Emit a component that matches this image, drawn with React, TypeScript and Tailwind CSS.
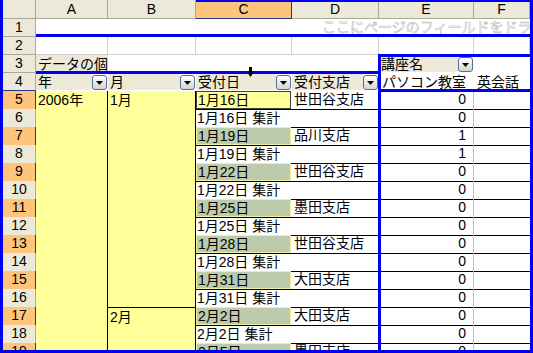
import React from "react";

type DataRow = {
  n: number;
  a?: string;
  b?: string;
  bTop?: boolean;
  c?: string;
  d?: string;
  sub?: string;
  e: string;
  active?: boolean;
};

const rows: DataRow[] = [
  { n: 5, a: "2006年", b: "1月", c: "1月16日", d: "世田谷支店", e: "0", active: true },
  { n: 6, sub: "1月16日 集計", e: "0" },
  { n: 7, c: "1月19日", d: "品川支店", e: "1" },
  { n: 8, sub: "1月19日 集計", e: "1" },
  { n: 9, c: "1月22日", d: "世田谷支店", e: "0" },
  { n: 10, sub: "1月22日 集計", e: "0" },
  { n: 11, c: "1月25日", d: "墨田支店", e: "0" },
  { n: 12, sub: "1月25日 集計", e: "0" },
  { n: 13, c: "1月28日", d: "世田谷支店", e: "0" },
  { n: 14, sub: "1月28日 集計", e: "0" },
  { n: 15, c: "1月31日", d: "大田支店", e: "0" },
  { n: 16, sub: "1月31日 集計", e: "0" },
  { n: 17, b: "2月", bTop: true, c: "2月2日", d: "大田支店", e: "0" },
  { n: 18, sub: "2月2日 集計", e: "0" },
  { n: 19, c: "2月5日", d: "墨田支店", e: "0" },
];

const gridCols = "grid grid-cols-[33px_72px_88px_96px_87px_95px_56px] h-[18px] shrink-0";

// row number on the left
function RowHead({ n, sel, navyBottom }: { n: number; sel?: boolean; navyBottom?: boolean }) {
  if (sel) {
    return (
      <div className="bg-[#ffc47c] border-r border-b border-[#27348b] text-center leading-[17px]">{n}</div>
    );
  }
  return (
    <div
      className={
        "bg-[#ece9d8] border-r border-r-[#aca899] border-b text-center leading-[17px] " +
        (navyBottom ? "border-b-[#27348b]" : "border-b-[#aca899]")
      }
    >
      {n}
    </div>
  );
}

function DropBtn() {
  return (
    <div className="w-[15px] h-[15px] shrink-0 rounded-[3px] border border-[#4d6f9c] bg-linear-to-b from-white to-[#d6d6ca] flex items-center justify-center">
      <svg width="7" height="4" viewBox="0 0 7 4">
        <path d="M0 0h7L3.5 4z" fill="#000" />
      </svg>
    </div>
  );
}

// pivot field button (label + dropdown)
function Field({ label }: { label: string }) {
  return (
    <div className="flex items-end pb-[1px] pr-[1px] bg-white overflow-hidden">
      <div className="flex-1 h-[16px] bg-[#ece9d8] pl-[2px] leading-[17px] whitespace-nowrap overflow-hidden">{label}</div>
      <DropBtn />
    </div>
  );
}

export default function App() {
  return (
    <div className="w-[533px] h-[353px] overflow-hidden bg-white border-x-[3px] border-b-[3px] border-[#0000ee] font-['Liberation_Sans','Noto_Sans_CJK_JP',sans-serif] text-[14px] text-black">
      <div className="relative h-full flex flex-col">
        {/* ---------- Column headers ---------- */}
        <div className="grid grid-cols-[33px_72px_88px_96px_87px_95px_56px] h-[19px] shrink-0">
          <div className="bg-[#ece9d8] border-r border-b border-[#aca899]" />
          <div className="bg-[#ece9d8] border-r border-b border-[#aca899] text-center leading-[18px]">A</div>
          <div className="bg-[#ece9d8] border-r border-b border-[#aca899] text-center leading-[18px]">B</div>
          <div className="bg-[#ffc47c] border-r border-b border-[#27348b] text-center leading-[18px]">C</div>
          <div className="bg-[#ece9d8] border-r border-b border-[#aca899] text-center leading-[18px]">D</div>
          <div className="bg-[#ece9d8] border-r border-b border-[#aca899] text-center leading-[18px]">E</div>
          <div className="bg-[#ece9d8] border-r border-b border-[#aca899] text-center leading-[18px]">F</div>
        </div>

        {/* ---------- Row 1: page field drop zone ---------- */}
        <div className={gridCols}>
          <RowHead n={1} />
          <div className="col-span-6 pl-[286px] whitespace-nowrap overflow-hidden leading-[16px] text-white [-webkit-text-stroke:0.5px_#b4b4b4]">
            ここにページのフィールドをドラッグします
          </div>
        </div>

        {/* ---------- Row 2 ---------- */}
        <div className={gridCols}>
          <RowHead n={2} />
          <div className="border-r border-b border-[#d0d0d0]" />
          <div className="border-r border-b border-[#d0d0d0]" />
          <div className="border-r border-b border-[#d0d0d0]" />
          <div className="border-r border-b border-[#d0d0d0]" />
          <div className="border-r border-b border-[#d0d0d0]" />
          <div className="border-r border-b border-[#d0d0d0]" />
        </div>

        {/* ---------- Row 3 ---------- */}
        <div className={gridCols}>
          <RowHead n={3} />
          <div className="bg-[#ece9d8] pl-[2px] leading-[18px] whitespace-nowrap overflow-hidden">データの個数 / 受付日</div>
          <div className="col-span-3" />
          <Field label="講座名" />
          <div />
        </div>

        {/* ---------- Row 4 ---------- */}
        <div className={gridCols}>
          <RowHead n={4} navyBottom />
          <Field label="年" />
          <Field label="月" />
          <Field label="受付日" />
          <Field label="受付支店" />
          <div className="pl-[3px] leading-[19px] whitespace-nowrap overflow-hidden">パソコン教室</div>
          <div className="pl-[3px] leading-[19px] whitespace-nowrap overflow-hidden">英会話</div>
        </div>

        {/* ---------- Data rows ---------- */}
        {rows.map((r) => (
          <div key={r.n} className={gridCols}>
            <RowHead n={r.n} sel={r.n % 2 === 1} navyBottom />
            <div className="bg-[#ffff99] border-r border-black pl-[2px] leading-[19px] whitespace-nowrap">{r.a}</div>
            <div className={"bg-[#ffff99] border-r border-r-black pl-[2px] leading-[18px] whitespace-nowrap " + (r.bTop ? "border-t border-t-black" : "")}>
              {r.b}
            </div>
            {r.sub ? (
              <div className="col-span-2 border-b border-black pl-[1px] leading-[18px] whitespace-nowrap">{r.sub}</div>
            ) : (
              <>
                <div className="border-b border-black pr-[1px]">
                  <div
                    className={
                      "h-full pl-[1px] leading-[16px] whitespace-nowrap " +
                      (r.active ? "bg-[#ffff99] border border-[#404040]" : "bg-[#bccbab] border border-[#efef9c]")
                    }
                  >
                    {r.c}
                  </div>
                </div>
                <div className="border-b border-black pl-[2px] leading-[17px] whitespace-nowrap">{r.d}</div>
              </>
            )}
            <div className="border-b border-b-black border-r border-r-[#c0c0c0] pr-[7px] text-right leading-[17px]">{r.e}</div>
            <div className="border-b border-black" />
          </div>
        ))}

        {/* ---------- Pivot outlines ---------- */}
        <div className="absolute left-[193px] right-0 top-0 h-[2px] bg-[#0000ee]" />
        <div className="absolute left-[33px] right-0 top-[34px] h-[3px] bg-[#0000ee]" />
        <div className="absolute left-[33px] w-[343px] top-[71px] h-[3px] bg-[#0000ee]" />
        <div className="absolute left-[375px] right-0 top-[54px] h-[3px] bg-[#0000ee]" />
        <div className="absolute left-[375px] right-0 top-[89px] h-[3px] bg-[#0000ee]" />
        <div className="absolute left-[375px] w-[3px] top-[54px] bottom-0 bg-[#0000ee]" />

        {/* drag indicator */}
        <svg className="absolute left-[244px] top-[67px]" width="7" height="10" viewBox="0 0 7 10">
          <path d="M2 0h3v5h2l-3.5 5L0 5h2z" fill="#000" />
        </svg>
      </div>
    </div>
  );
}
